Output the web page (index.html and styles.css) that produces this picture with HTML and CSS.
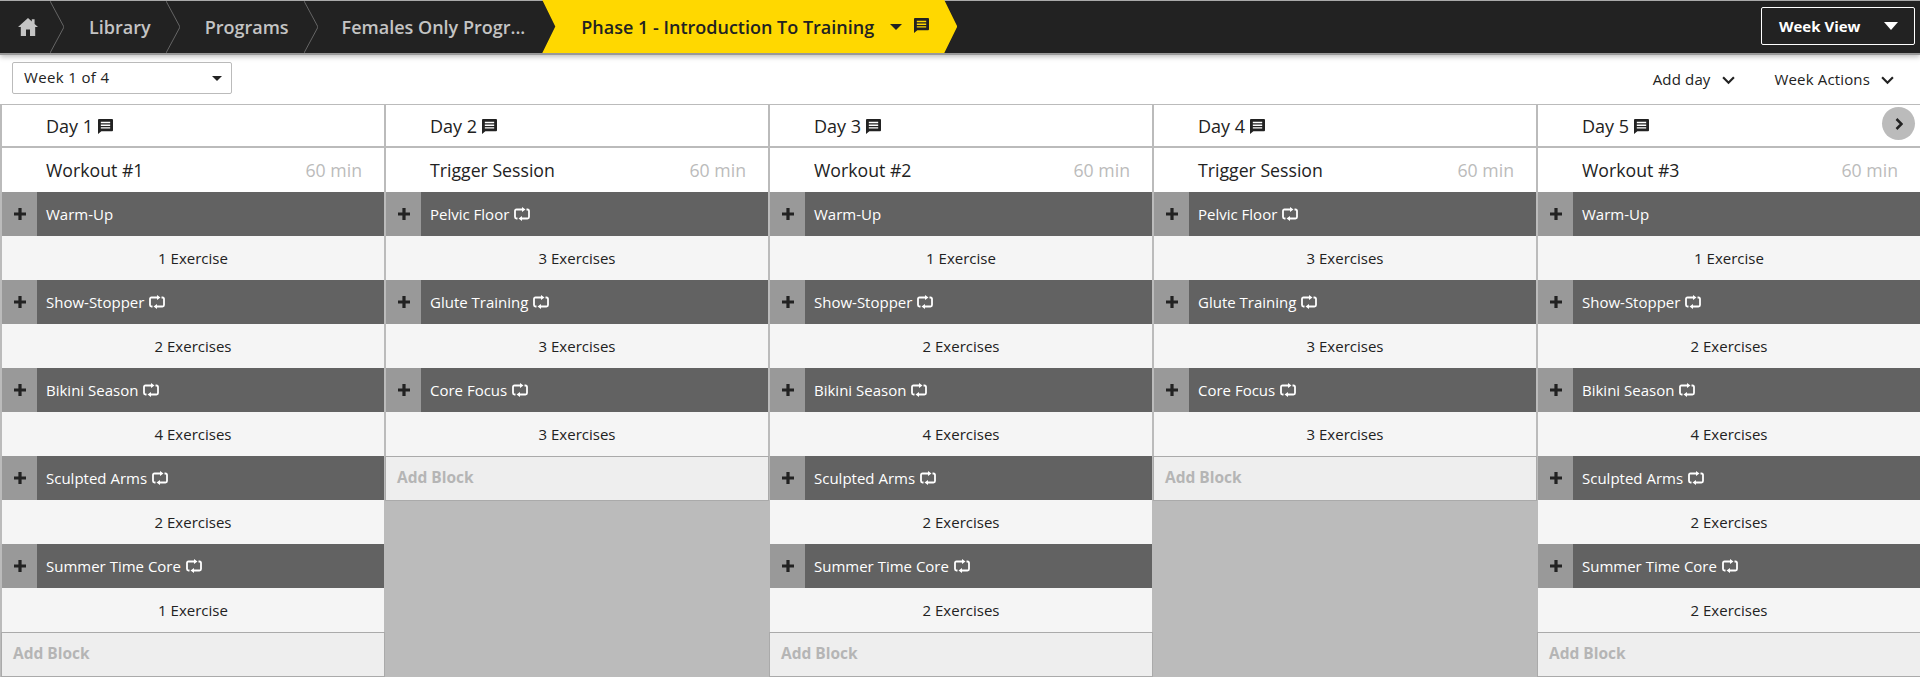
FILE: index.html
```html
<!DOCTYPE html>
<html>
<head>
  <title>Phase 1 - Introduction To Training</title>
  <link rel="stylesheet" href="styles.css">
</head>
<body>
  <svg class="icon-defs" width="0" height="0">
    <symbol id="i-home" viewBox="0 0 20 18"><path d="M10 0 L13.8 3.4 V1.2 H16.6 V5.9 L20 9 H17.2 V18 H12 V11.6 H8 V18 H2.8 V9 H0 Z"/></symbol>
    <symbol id="i-comment" viewBox="0 0 16 16"><path fill-rule="evenodd" d="M1 0 H15 Q16 0 16 1 V12 Q16 13 15 13 H3.6 L0 16 V1 Q0 0 1 0 Z M3 3 V4.6 H13 V3 Z M3 5.9 V7.4 H13 V5.9 Z M3 8.7 V10.2 H13 V8.7 Z"/></symbol>
    <symbol id="i-repeat" viewBox="0 0 16 14"><path fill="none" stroke="currentColor" stroke-width="1.8" d="M8 2.5 H2.5 Q1 2.5 1 4 V10 Q1 11.5 2.5 11.5 H3.5 M8 11.5 H13.5 Q15 11.5 15 10 V4 Q15 2.5 13.5 2.5 H12.5"/><path fill="currentColor" d="M8 0 L11.5 2.5 L8 5 Z M8 9 L4.5 11.5 L8 14 Z"/></symbol>
    <symbol id="i-plus" viewBox="0 0 12 12"><path d="M4.4 0 H7.6 V4.4 H12 V7.6 H7.6 V12 H4.4 V7.6 H0 V4.4 H4.4 Z"/></symbol>
  </svg>

  <header class="topbar">
    <nav class="crumbs">
      <a class="crumb-home"><svg class="home-icon"><use href="#i-home"/></svg></a>
      <svg class="crumb-sep" viewBox="0 0 14 52" preserveAspectRatio="none"><path d="M0 0 L14 26 L0 52"/></svg>
      <a class="crumb">Library</a>
      <svg class="crumb-sep" viewBox="0 0 14 52" preserveAspectRatio="none"><path d="M0 0 L14 26 L0 52"/></svg>
      <a class="crumb">Programs</a>
      <svg class="crumb-sep" viewBox="0 0 14 52" preserveAspectRatio="none"><path d="M0 0 L14 26 L0 52"/></svg>
      <a class="crumb crumb-last">Females Only Progr...</a>
      <div class="crumb-active">
        <span>Phase 1 - Introduction To Training</span>
        <i class="caret caret-dark"></i>
        <svg class="comment-icon"><use href="#i-comment"/></svg>
      </div>
    </nav>
    <button class="view-button">Week View <i class="caret caret-white"></i></button>
  </header>

  <div class="toolbar">
    <div class="week-select"><span>Week 1 of 4</span> <i class="caret caret-small"></i></div>
    <div class="toolbar-actions">
      <a class="action">Add day <svg class="chevron" viewBox="0 0 12 8"><path d="M1 1 L6 6 L11 1"/></svg></a>
      <a class="action">Week Actions <svg class="chevron" viewBox="0 0 12 8"><path d="M1 1 L6 6 L11 1"/></svg></a>
    </div>
  </div>

  <main class="week">
    <section class="day">
      <div class="day-head">Day 1 <svg class="comment-icon"><use href="#i-comment"/></svg></div>
      <div class="workout-head"><span>Workout #1</span><span class="mins">60 min</span></div>
      <div class="block"><div class="block-add"><svg><use href="#i-plus"/></svg></div><div class="block-title">Warm-Up</div></div>
      <div class="count">1 Exercise</div>
      <div class="block"><div class="block-add"><svg><use href="#i-plus"/></svg></div><div class="block-title">Show-Stopper <svg class="repeat"><use href="#i-repeat"/></svg></div></div>
      <div class="count">2 Exercises</div>
      <div class="block"><div class="block-add"><svg><use href="#i-plus"/></svg></div><div class="block-title">Bikini Season <svg class="repeat"><use href="#i-repeat"/></svg></div></div>
      <div class="count">4 Exercises</div>
      <div class="block"><div class="block-add"><svg><use href="#i-plus"/></svg></div><div class="block-title">Sculpted Arms <svg class="repeat"><use href="#i-repeat"/></svg></div></div>
      <div class="count">2 Exercises</div>
      <div class="block"><div class="block-add"><svg><use href="#i-plus"/></svg></div><div class="block-title">Summer Time Core <svg class="repeat"><use href="#i-repeat"/></svg></div></div>
      <div class="count">1 Exercise</div>
      <div class="add-block">Add Block</div>
    </section>

    <section class="day">
      <div class="day-head">Day 2 <svg class="comment-icon"><use href="#i-comment"/></svg></div>
      <div class="workout-head"><span>Trigger Session</span><span class="mins">60 min</span></div>
      <div class="block"><div class="block-add"><svg><use href="#i-plus"/></svg></div><div class="block-title">Pelvic Floor <svg class="repeat"><use href="#i-repeat"/></svg></div></div>
      <div class="count">3 Exercises</div>
      <div class="block"><div class="block-add"><svg><use href="#i-plus"/></svg></div><div class="block-title">Glute Training <svg class="repeat"><use href="#i-repeat"/></svg></div></div>
      <div class="count">3 Exercises</div>
      <div class="block"><div class="block-add"><svg><use href="#i-plus"/></svg></div><div class="block-title">Core Focus <svg class="repeat"><use href="#i-repeat"/></svg></div></div>
      <div class="count">3 Exercises</div>
      <div class="add-block">Add Block</div>
    </section>

    <section class="day">
      <div class="day-head">Day 3 <svg class="comment-icon"><use href="#i-comment"/></svg></div>
      <div class="workout-head"><span>Workout #2</span><span class="mins">60 min</span></div>
      <div class="block"><div class="block-add"><svg><use href="#i-plus"/></svg></div><div class="block-title">Warm-Up</div></div>
      <div class="count">1 Exercise</div>
      <div class="block"><div class="block-add"><svg><use href="#i-plus"/></svg></div><div class="block-title">Show-Stopper <svg class="repeat"><use href="#i-repeat"/></svg></div></div>
      <div class="count">2 Exercises</div>
      <div class="block"><div class="block-add"><svg><use href="#i-plus"/></svg></div><div class="block-title">Bikini Season <svg class="repeat"><use href="#i-repeat"/></svg></div></div>
      <div class="count">4 Exercises</div>
      <div class="block"><div class="block-add"><svg><use href="#i-plus"/></svg></div><div class="block-title">Sculpted Arms <svg class="repeat"><use href="#i-repeat"/></svg></div></div>
      <div class="count">2 Exercises</div>
      <div class="block"><div class="block-add"><svg><use href="#i-plus"/></svg></div><div class="block-title">Summer Time Core <svg class="repeat"><use href="#i-repeat"/></svg></div></div>
      <div class="count">2 Exercises</div>
      <div class="add-block">Add Block</div>
    </section>

    <section class="day">
      <div class="day-head">Day 4 <svg class="comment-icon"><use href="#i-comment"/></svg></div>
      <div class="workout-head"><span>Trigger Session</span><span class="mins">60 min</span></div>
      <div class="block"><div class="block-add"><svg><use href="#i-plus"/></svg></div><div class="block-title">Pelvic Floor <svg class="repeat"><use href="#i-repeat"/></svg></div></div>
      <div class="count">3 Exercises</div>
      <div class="block"><div class="block-add"><svg><use href="#i-plus"/></svg></div><div class="block-title">Glute Training <svg class="repeat"><use href="#i-repeat"/></svg></div></div>
      <div class="count">3 Exercises</div>
      <div class="block"><div class="block-add"><svg><use href="#i-plus"/></svg></div><div class="block-title">Core Focus <svg class="repeat"><use href="#i-repeat"/></svg></div></div>
      <div class="count">3 Exercises</div>
      <div class="add-block">Add Block</div>
    </section>

    <section class="day">
      <div class="day-head">Day 5 <svg class="comment-icon"><use href="#i-comment"/></svg></div>
      <div class="workout-head"><span>Workout #3</span><span class="mins">60 min</span></div>
      <div class="block"><div class="block-add"><svg><use href="#i-plus"/></svg></div><div class="block-title">Warm-Up</div></div>
      <div class="count">1 Exercise</div>
      <div class="block"><div class="block-add"><svg><use href="#i-plus"/></svg></div><div class="block-title">Show-Stopper <svg class="repeat"><use href="#i-repeat"/></svg></div></div>
      <div class="count">2 Exercises</div>
      <div class="block"><div class="block-add"><svg><use href="#i-plus"/></svg></div><div class="block-title">Bikini Season <svg class="repeat"><use href="#i-repeat"/></svg></div></div>
      <div class="count">4 Exercises</div>
      <div class="block"><div class="block-add"><svg><use href="#i-plus"/></svg></div><div class="block-title">Sculpted Arms <svg class="repeat"><use href="#i-repeat"/></svg></div></div>
      <div class="count">2 Exercises</div>
      <div class="block"><div class="block-add"><svg><use href="#i-plus"/></svg></div><div class="block-title">Summer Time Core <svg class="repeat"><use href="#i-repeat"/></svg></div></div>
      <div class="count">2 Exercises</div>
      <div class="add-block">Add Block</div>
    </section>

    <button class="next-day"><svg viewBox="0 0 8 12"><path d="M1.5 1 L6.5 6 L1.5 11"/></svg></button>
  </main>
</body>
</html>
```

FILE: styles.css
```css
body {
  margin: 0;
  height: 677px;
  overflow: hidden;
  background-color: #fff;
  color: #222;
  font-family: "Open Sans", sans-serif;
  display: flex;
  flex-direction: column;
}
.icon-defs {
  position: absolute;
}
.topbar {
  height: 55px;
  box-sizing: border-box;
  flex: none;
  background-color: #222;
  border-top: 1px solid #aaa;
  border-bottom: 2px solid #999;
  box-shadow: 0 2px 5px rgba(0, 0, 0, 0.25);
  display: flex;
  justify-content: space-between;
  align-items: stretch;
  position: relative;
  z-index: 1;
}
.crumbs {
  display: flex;
  align-items: stretch;
}
.crumb-home {
  width: 50px;
  display: flex;
  align-items: center;
  justify-content: center;
  padding-left: 6px;
  box-sizing: border-box;
}
.home-icon {
  width: 20px;
  height: 18px;
  fill: #c4c4c4;
}
.crumb-sep {
  width: 14px;
  height: 52px;
  flex: none;
  fill: none;
  stroke: #666;
  stroke-width: 1;
}
.crumb {
  color: #c4c4c4;
  font-size: 18px;
  font-weight: 600;
  padding: 0 15px 0 25px;
  display: flex;
  align-items: center;
  white-space: nowrap;
}
.crumb-last {
  padding: 0 17px 0 24px;
}
.crumb-active {
  width: 415px;
  box-sizing: border-box;
  margin-top: -1px;
  padding-left: 39px;
  background-color: #ffd800;
  clip-path: polygon(0 0, calc(100% - 13px) 0, 100% 50%, calc(100% - 13px) 100%, 0 100%, 13px 50%);
  color: #222;
  font-size: 18px;
  font-weight: 600;
  display: flex;
  align-items: center;
  white-space: nowrap;
}
.crumb-active .caret {
  margin-left: 16px;
}
.crumb-active .comment-icon {
  margin-left: 12px;
  margin-top: -3px;
}
.comment-icon {
  width: 15px;
  height: 15px;
  margin-top: 2px;
  fill: #222;
}
.caret {
  display: inline-block;
  width: 0;
  height: 0;
  border-style: solid;
  border-color: transparent;
  border-bottom-width: 0;
}
.caret-dark {
  border-width: 6px 6px 0;
  border-top-color: #222;
}
.caret-white {
  border-width: 8px 7.5px 0;
  border-top-color: #fff;
}
.caret-small {
  border-width: 5px 5px 0;
  border-top-color: #222;
  margin-top: 2px;
}
.view-button {
  width: 154px;
  height: 38px;
  margin: 6px 5px 0 0;
  padding: 0 16px 0 17px;
  background-color: #222;
  border: 1px solid #fff;
  border-radius: 2px;
  color: #fff;
  font-family: inherit;
  font-size: 15px;
  font-weight: 700;
  display: flex;
  align-items: center;
  justify-content: space-between;
  white-space: nowrap;
}
.toolbar {
  height: 49px;
  flex: none;
  box-sizing: border-box;
  padding: 7px 26px 0 12px;
  display: flex;
  justify-content: space-between;
  align-items: flex-start;
  font-size: 15px;
}
.week-select {
  width: 220px;
  height: 32px;
  box-sizing: border-box;
  padding: 0 9px 2px 11px;
  border: 1px solid #bbb;
  border-radius: 2px;
  letter-spacing: 0.35px;
  display: flex;
  align-items: center;
  justify-content: space-between;
}
.toolbar-actions {
  display: flex;
  gap: 40px;
  height: 34px;
  align-items: center;
  letter-spacing: 0.15px;
}
.action {
  display: flex;
  align-items: center;
  gap: 11px;
}
.chevron {
  width: 13px;
  height: 9px;
  margin-top: 2px;
  fill: none;
  stroke: #222;
  stroke-width: 2;
}
.week {
  flex: 1;
  position: relative;
  display: grid;
  grid-template-columns: repeat(5, 382px);
  column-gap: 2px;
  padding-left: 2px;
  background-color: #bbb;
  border-top: 1px solid #bbb;
  overflow: hidden;
}
.day {
  display: flex;
  flex-direction: column;
}
.day-head {
  height: 41px;
  flex: none;
  box-sizing: border-box;
  padding-left: 44px;
  background-color: #fff;
  font-size: 18px;
  display: flex;
  align-items: center;
  gap: 5px;
  white-space: nowrap;
  margin-bottom: 2px;
}
.workout-head {
  height: 44px;
  flex: none;
  box-sizing: border-box;
  padding: 0 22px 0 44px;
  background-color: #fff;
  font-size: 17.7px;
  display: flex;
  justify-content: space-between;
  align-items: center;
}
.mins {
  color: #bbb;
}
.block {
  height: 44px;
  flex: none;
  display: flex;
  background-color: #626262;
  color: #fff;
  font-size: 15px;
}
.block-add {
  width: 35px;
  background-color: #999;
  display: flex;
  align-items: center;
  justify-content: center;
}
.block-add svg {
  width: 12px;
  height: 12px;
  fill: #222;
}
.block-title {
  padding-left: 9px;
  display: flex;
  align-items: center;
  gap: 5px;
  white-space: nowrap;
}
.repeat {
  width: 16px;
  height: 14px;
  color: #fff;
}
.count {
  height: 44px;
  flex: none;
  background-color: #f5f5f5;
  font-size: 15px;
  display: flex;
  align-items: center;
  justify-content: center;
}
.add-block {
  height: 45px;
  flex: none;
  box-sizing: border-box;
  padding: 0 0 4px 11px;
  background-color: #eee;
  border: 1px solid #aaa;
  margin-left: -1px;
  margin-right: -1px;
  color: #b5b5b5;
  font-size: 15.5px;
  font-weight: 700;
  display: flex;
  align-items: center;
}
.next-day {
  position: absolute;
  top: 2px;
  right: 5px;
  width: 33px;
  height: 33px;
  padding: 0;
  border: none;
  border-radius: 50%;
  background-color: #bbb;
  display: flex;
  align-items: center;
  justify-content: center;
}
.next-day svg {
  width: 8px;
  height: 12px;
  fill: none;
  stroke: #222;
  stroke-width: 2.5;
}
```
